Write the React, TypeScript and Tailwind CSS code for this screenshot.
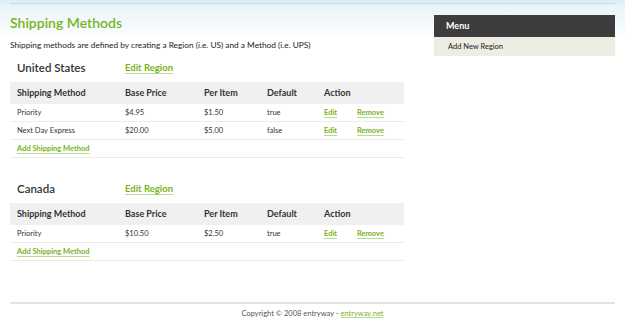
const font = { fontFamily: '"Lato", "Open Sans", Arial, sans-serif' };

type Method = { name: string; base: string; per: string; def: string };

const regions: { name: string; methods: Method[] }[] = [
  {
    name: 'United States',
    methods: [
      { name: 'Priority', base: '$4.95', per: '$1.50', def: 'true' },
      { name: 'Next Day Express', base: '$20.00', per: '$5.00', def: 'false' },
    ],
  },
  {
    name: 'Canada',
    methods: [{ name: 'Priority', base: '$10.50', per: '$2.50', def: 'true' }],
  },
];

const link = 'text-[#77b31b] font-bold underline decoration-[#b9dc8c] underline-offset-[2px]';

function RegionBlock({ name, methods }: { name: string; methods: Method[] }) {
  return (
    <div>
      <div className="flex items-center h-[14px] pl-[7px]">
        <span className="w-[108px] text-[11.5px] font-semibold text-[#333]">{name}</span>
        <a className={`${link} text-[9.5px]`}>Edit Region</a>
      </div>
      <div className="mt-[7px]">
        <div className="grid grid-cols-[108px_79px_63px_57px_43px_1fr] items-center h-[22px] bg-[#f0f0f0] pl-[7px] text-[9px] font-bold text-[#333]">
          <span>Shipping Method</span>
          <span>Base Price</span>
          <span>Per Item</span>
          <span>Default</span>
          <span>Action</span>
          <span />
        </div>
        {methods.map((m) => (
          <div
            key={m.name}
            className="grid grid-cols-[108px_79px_63px_57px_33px_1fr] items-center h-[18px] pl-[7px] border-b border-[#ececec] text-[7.5px] text-[#333]"
          >
            <span>{m.name}</span>
            <span>{m.base}</span>
            <span>{m.per}</span>
            <span>{m.def}</span>
            <a className={`${link} text-[7.5px]`}>Edit</a>
            <a className={`${link} text-[7.5px]`}>Remove</a>
          </div>
        ))}
        <div className="flex items-center h-[18px] pl-[7px] border-b border-[#ececec]">
          <a className={`${link} text-[7.5px]`}>Add Shipping Method</a>
        </div>
      </div>
    </div>
  );
}

export default function App() {
  return (
    <div
      style={font}
      className="w-[625px] h-[331px] overflow-hidden bg-[linear-gradient(to_bottom,#dcecf5_0px,#e9f4f9_6px,#ffffff_40px)]"
    >
      <div className="px-[10px]">
        <div className="mt-[3px] border-t border-[#c8d9e3]" />
        <div className="flex gap-[30px] pt-[10px]">
          <div className="w-[394px]">
            <h1 className="text-[14px] leading-[18px] font-semibold text-[#76b41a]">Shipping Methods</h1>
            <p className="mt-[7px] text-[8.3px] leading-[12px] text-[#222]">
              Shipping methods are defined by creating a Region (i.e. US) and a Method (i.e. UPS)
            </p>
            <div className="mt-[10px] flex flex-col gap-[24px]">
              {regions.map((r) => (
                <RegionBlock key={r.name} name={r.name} methods={r.methods} />
              ))}
            </div>
          </div>
          <div className="w-[181px] mt-[1px]">
            <div className="h-[22px] flex items-center pl-[12px] bg-[#3d3d3d] text-white text-[9px] font-bold">Menu</div>
            <div className="h-[19px] flex items-center pl-[14px] bg-[#eeede3] text-[#222] text-[7.5px]">
              Add New Region
            </div>
          </div>
        </div>
        <div className="mt-[41px] border-t-2 border-[#e3e3e3]" />
        <div className="mt-[4px] text-center text-[7.5px] text-[#555]">
          Copyright © 2008 entryway - <a className="text-[#77b31b] underline decoration-[#b9dc8c]">entryway.net</a>
        </div>
      </div>
    </div>
  );
}
